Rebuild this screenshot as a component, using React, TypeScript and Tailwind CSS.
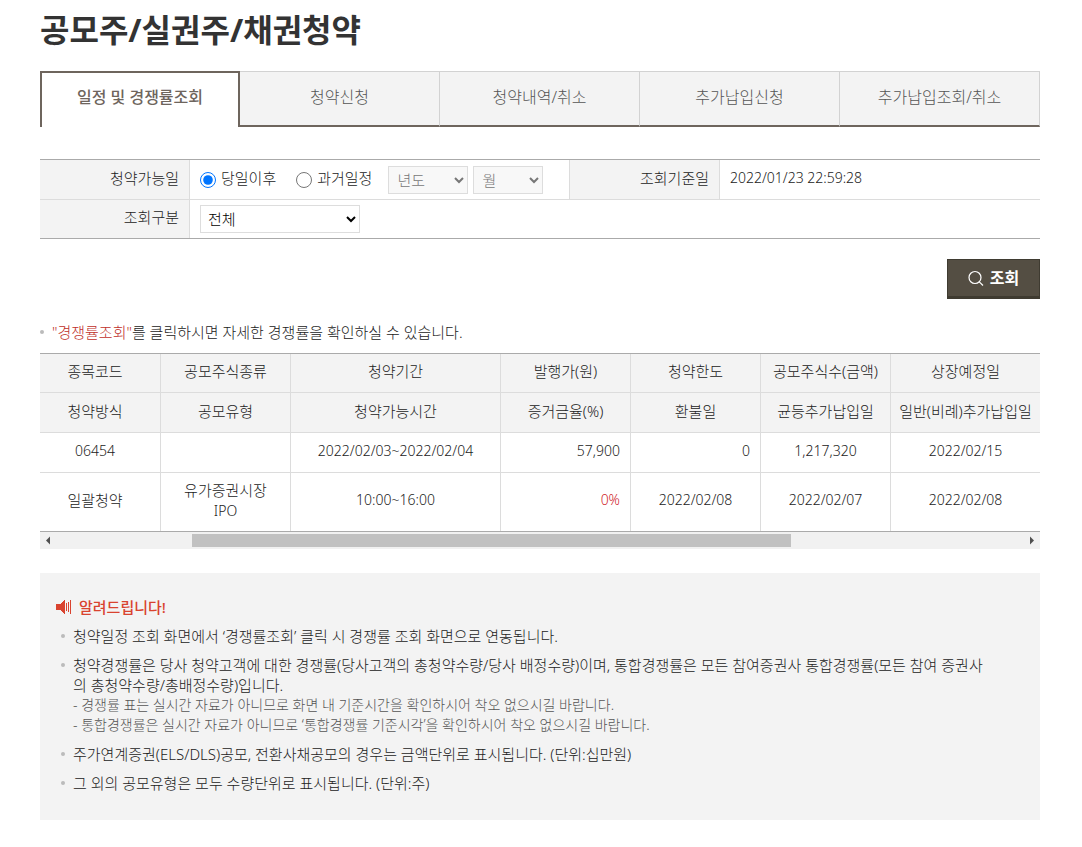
import { ReactNode } from 'react'

interface Column {
  width: string
  top: string
  bottom: string
}

const tabs = ['일정 및 경쟁률조회', '청약신청', '청약내역/취소', '추가납입신청', '추가납입조회/취소']

const columns: Column[] = [
  { width: '12%', top: '종목코드', bottom: '청약방식' },
  { width: '13%', top: '공모주식종류', bottom: '공모유형' },
  { width: '21%', top: '청약기간', bottom: '청약가능시간' },
  { width: '13%', top: '발행가(원)', bottom: '증거금율(%)' },
  { width: '13%', top: '청약한도', bottom: '환불일' },
  { width: '13%', top: '공모주식수(금액)', bottom: '균등추가납입일' },
  { width: '15%', top: '상장예정일', bottom: '일반(비례)추가납입일' },
]

function SearchIcon() {
  return (
    <svg width="16" height="16" viewBox="0 0 16 16" fill="none" stroke="currentColor" strokeWidth="1.2">
      <circle cx="7" cy="7.5" r="6" />
      <path d="M11.3 11.8 15 15.5" />
    </svg>
  )
}

function SpeakerIcon() {
  return (
    <svg width="16" height="16" viewBox="0 0 16 16" fill="#d9432f" shapeRendering="crispEdges">
      <path d="M0 5h4l5-4v14l-5-4H0z" />
      <path d="M10 4h1v8h-1zM12 3h1v10h-1zM14 1h1v14h-1z" />
    </svg>
  )
}

function Th({ children }: { children: ReactNode }) {
  return (
    <th scope="row" className="border-r border-[#dcdcdc] bg-[#f3f3f3] pr-[10px] pb-1 text-right font-light">
      {children}
    </th>
  )
}

function Notice({ children }: { children: ReactNode }) {
  return (
    <li className="flex gap-2">
      <span className="mt-2 size-1 shrink-0 rounded-full bg-[#bbb]" />
      <div>{children}</div>
    </li>
  )
}

export default function App() {
  return (
    <main className="bg-white pt-2 pr-[42px] pb-[27px] pl-10 font-['Noto_Sans','Noto_Sans_CJK_KR',sans-serif] text-[15px] leading-5 font-light text-[#222]">
      <h1 className="text-[32px] leading-[44px] font-bold text-[#333]">공모주/실권주/채권청약</h1>

      <nav className="mt-[19px] grid h-14 grid-cols-5 text-base">
        {tabs.map((tab, i) => (
          <a
            key={tab}
            href="#"
            className={
              i === 0
                ? 'border-2 border-b-0 border-[#6e655d] pt-3 text-center font-medium text-[#6e655d]'
                : 'border-t border-r border-b-2 border-[#d2d2d2] border-b-[#6e655d] bg-[#f3f3f3] pt-[13px] text-center text-[#555]'
            }
          >
            {tab}
          </a>
        ))}
      </nav>

      <form onSubmit={(e) => e.preventDefault()}>
        <table className="mt-8 w-full table-fixed border-separate border-spacing-0 border-y border-[#aaa]">
          <colgroup>
            <col className="w-[15%]" />
            <col className="w-[38%]" />
            <col className="w-[15%]" />
            <col className="w-[32%]" />
          </colgroup>
          <tbody>
            <tr className="h-10 [&>*]:border-b [&>*]:border-[#dcdcdc]">
              <Th>청약가능일</Th>
              <td className="border-r pl-[10px]">
                <div className="flex items-center">
                  <label className="mr-5 flex items-center gap-[5px]">
                    <input type="radio" name="date" defaultChecked className="size-4" />
                    <span className="pb-[3px]">당일이후</span>
                  </label>
                  <label className="mr-4 flex items-center gap-[5px]">
                    <input type="radio" name="date" className="size-4" />
                    <span className="pb-[3px]">과거일정</span>
                  </label>
                  <select aria-label="년도" disabled className="mr-[5px] h-7 w-20 border border-[#ddd] bg-[#f8f8f8] px-1 text-[#777]">
                    <option>년도</option>
                  </select>
                  <select aria-label="월" disabled className="h-7 w-[70px] border border-[#ddd] bg-[#f8f8f8] px-1 text-[#777]">
                    <option>월</option>
                  </select>
                </div>
              </td>
              <Th>조회기준일</Th>
              <td className="pb-1 pl-[10px] text-sm">2022/01/23 22:59:28</td>
            </tr>
            <tr className="h-[38px]">
              <Th>
                <label htmlFor="kind">조회구분</label>
              </Th>
              <td colSpan={3} className="pl-[10px]">
                <select id="kind" className="block h-7 w-40 border border-[#ddd] bg-white px-[3px] text-black">
                  <option>전체</option>
                </select>
              </td>
            </tr>
          </tbody>
        </table>

        <div className="mt-5 flex justify-end">
          <button
            type="submit"
            className="flex h-10 w-[93px] items-center justify-center gap-[6px] border border-b-3 border-[#3f3b31] bg-[#544e43] text-base font-bold text-white"
          >
            <SearchIcon />
            조회
          </button>
        </div>
      </form>

      <p className="mt-[23px] flex items-center gap-2">
        <span className="size-1 rounded-full bg-[#bbb]" />
        <span>
          <span className="text-[#c0302a]">"경쟁률조회"</span>를 클릭하시면 자세한 경쟁률을 확인하실 수 있습니다.
        </span>
      </p>

      <table className="mt-[11px] w-full table-fixed border-separate border-spacing-0 border-y border-[#aaa] text-center [&_td]:border-[#dcdcdc] [&_td:not(:first-child)]:border-l [&_th]:border-b [&_th]:border-[#dcdcdc] [&_th]:bg-[#f3f3f3] [&_th]:pb-1 [&_th]:font-light [&_th]:whitespace-nowrap [&_th:not(:first-child)]:border-l [&_tr>*:first-child]:pr-[10px]">
        <colgroup>
          {columns.map((c) => (
            <col key={c.top} style={{ width: c.width }} />
          ))}
        </colgroup>
        <thead>
          <tr className="h-[39px]">
            {columns.map((c) => (
              <th key={c.top}>{c.top}</th>
            ))}
          </tr>
          <tr className="h-10">
            {columns.map((c) => (
              <th key={c.bottom}>{c.bottom}</th>
            ))}
          </tr>
        </thead>
        <tbody className="text-sm leading-5">
          <tr className="h-10 [&>td]:border-b [&>td]:pb-1">
            <td>06454</td>
            <td />
            <td>2022/02/03~2022/02/04</td>
            <td className="pr-[10px] text-right">57,900</td>
            <td className="pr-[10px] text-right">0</td>
            <td>1,217,320</td>
            <td>2022/02/15</td>
          </tr>
          <tr className="h-[58px] [&>td]:pb-1">
            <td className="text-[15px]">일괄청약</td>
            <td>
              <span className="text-[15px]">유가증권시장</span>
              <br />
              IPO
            </td>
            <td>10:00~16:00</td>
            <td className="pr-[10px] text-right text-[#d0242b]">0%</td>
            <td>2022/02/08</td>
            <td>2022/02/07</td>
            <td>2022/02/08</td>
          </tr>
        </tbody>
      </table>
      <div className="flex h-[17px] items-center bg-[#f1f1f1]">
        <svg width="17" height="17" fill="#505050">
          <path d="M6 8.5 10 4.5v8z" />
        </svg>
        <div className="flex h-[13px] flex-1">
          <div className="ml-[14%] w-[62%] bg-[#c1c1c1]" />
        </div>
        <svg width="17" height="17" fill="#505050">
          <path d="M11 8.5 7 4.5v8z" />
        </svg>
      </div>

      <section className="mt-6 bg-[#f3f3f3] pt-6 pr-12 pb-[27px] pl-4">
        <h2 className="flex items-center gap-[7px] font-medium text-[#d9432f]">
          <SpeakerIcon />
          알려드립니다!
        </h2>
        <ul className="mt-[9px] flex flex-col gap-[9px] pl-[5px]">
          <Notice>청약일정 조회 화면에서 ‘경쟁률조회’ 클릭 시 경쟁률 조회 화면으로 연동됩니다.</Notice>
          <Notice>
            청약경쟁률은 당사 청약고객에 대한 경쟁률(당사고객의 총청약수량/당사 배정수량)이며, 통합경쟁률은 모든
            참여증권사 통합경쟁률(모든 참여 증권사의 총청약수량/총배정수량)입니다.
            <p className="text-sm leading-5 text-[#555]">
              - 경쟁률 표는 실시간 자료가 아니므로 화면 내 기준시간을 확인하시어 착오 없으시길 바랍니다.
            </p>
            <p className="text-sm leading-5 text-[#555]">
              - 통합경쟁률은 실시간 자료가 아니므로 ‘통합경쟁률 기준시각’을 확인하시어 착오 없으시길 바랍니다.
            </p>
          </Notice>
          <Notice>주가연계증권(ELS/DLS)공모, 전환사채공모의 경우는 금액단위로 표시됩니다. (단위:십만원)</Notice>
          <Notice>그 외의 공모유형은 모두 수량단위로 표시됩니다. (단위:주)</Notice>
        </ul>
      </section>
    </main>
  )
}
